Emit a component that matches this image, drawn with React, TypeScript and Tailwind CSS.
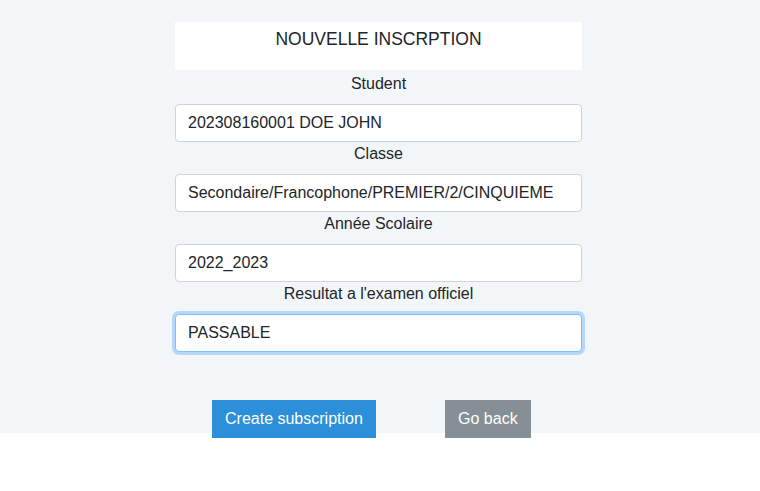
const fields = [
  { label: 'Student', value: '202308160001 DOE JOHN' },
  { label: 'Classe', value: 'Secondaire/Francophone/PREMIER/2/CINQUIEME' },
  { label: 'Année Scolaire', value: '2022_2023' },
  { label: "Resultat a l'examen officiel", value: 'PASSABLE', focused: true },
]

export default function App() {
  return (
    <div className="min-h-screen bg-white font-['Liberation_Sans',Arial,sans-serif] text-[16px] text-[#212529]">
      <div className="h-[433px] bg-[#f3f6f9] pt-[22px]">
        <div className="ml-[175px] w-[407px]">
          <div className="mb-[2px] h-[48px] bg-white pt-[4px] text-center text-[17.5px] leading-[1.5]">
            NOUVELLE INSCRPTION
          </div>

          {fields.map((f) => (
            <div key={f.label}>
              <div className="mb-[8px] text-center leading-[24px]">{f.label}</div>
              <input
                readOnly
                value={f.value}
                className={
                  f.focused
                    ? 'block h-[38px] w-full rounded-[4px] border border-[#80bdff] bg-white px-3 py-[6px] leading-[24px] text-[#212529] shadow-[0_0_0_3px_rgba(0,123,255,0.25)] outline-none'
                    : 'block h-[38px] w-full rounded-[4px] border border-[#ced4da] bg-white px-3 py-[6px] leading-[24px] text-[#212529] outline-none'
                }
              />
            </div>
          ))}

          {/* Actions */}
          <div className="mt-[48px] flex">
            <button className="ml-[37px] h-[38px] bg-[#2b90d9] px-[13px] leading-[24px] text-white">
              Create subscription
            </button>
            <button className="ml-[69px] h-[38px] w-[86px] bg-[#868e96] leading-[24px] text-white">
              Go back
            </button>
          </div>
        </div>
      </div>
    </div>
  )
}
